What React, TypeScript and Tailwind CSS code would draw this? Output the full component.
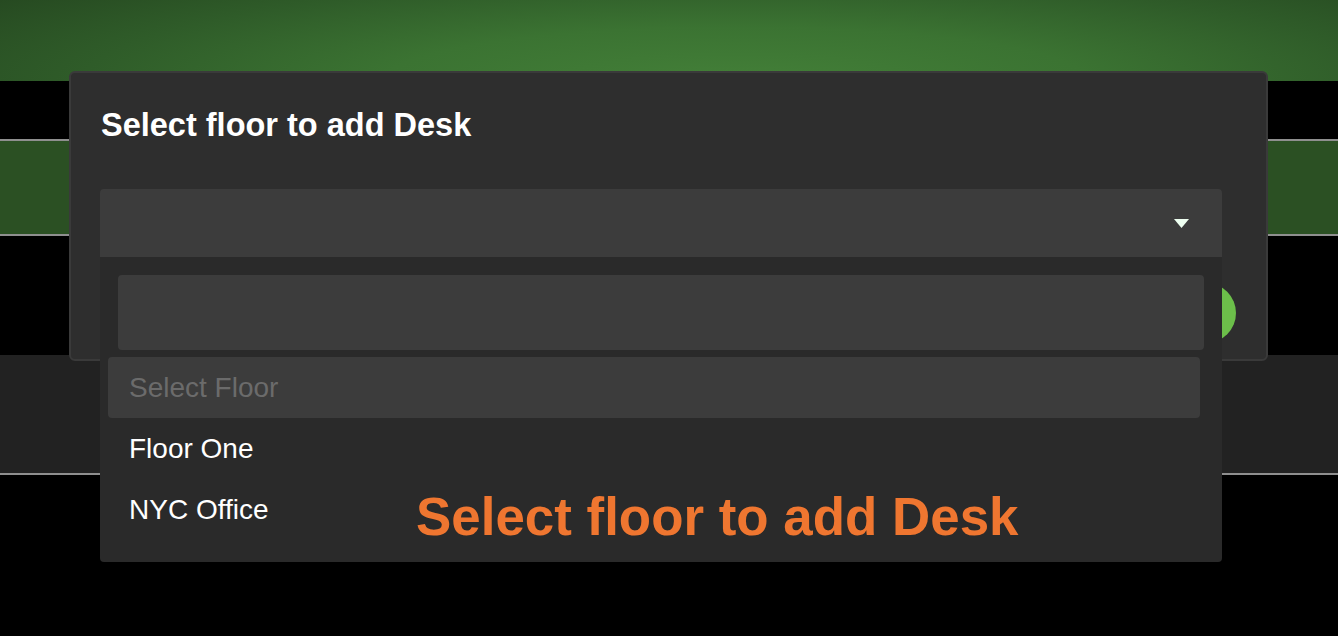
import React from "react";

export default function App() {
  return (
    <div className="relative w-[1338px] h-[636px] overflow-hidden bg-black font-['Liberation_Sans',Arial,sans-serif]">
      {/* background page bands */}
      <div className="flex flex-col">
        <div className="h-[81px] bg-[radial-gradient(ellipse_75%_190%_at_55%_100%,#437f38_0%,#3b7332_35%,#2f5c29_65%,#23431e_100%)]" />
        <div className="h-[58px] bg-black" />
        <div className="h-[2px] bg-[#8f8f8f]" />
        <div className="h-[93px] bg-[#2b5023]" />
        <div className="h-[2px] bg-[#8f8f8f]" />
        <div className="h-[119px] bg-black" />
        <div className="h-[118px] bg-[#222222]" />
        <div className="h-[2px] bg-[#8f8f8f]" />
        <div className="h-[161px] bg-black" />
      </div>

      {/* modal */}
      <div className="absolute left-[69px] top-[71px] w-[1199px] h-[290px] rounded-[6px] border-2 border-[#3a3a3a] bg-[#2e2e2e] pl-[30px] pt-[36px]">
        {/* green button behind dropdown */}
        <div className="absolute left-[1105px] top-[210px] w-[60px] h-[60px] rounded-full bg-[#6cbf4a]" />

        <h2 className="h-[32px] text-[32.5px] leading-[32px] font-bold text-white">Select floor to add Desk</h2>

        <div className="relative -ml-[1px] mt-[48px] w-[1122px]">
          <div className="flex h-[68px] items-center justify-end rounded-t-[4px] bg-[#3c3c3c] pr-[33px]">
            <svg width="15" height="9" viewBox="0 0 15 9">
              <path d="M0 0 H15 L7.5 9 Z" fill="#eefff1" />
            </svg>
          </div>

          {/* dropdown */}
          <div className="absolute left-0 top-full z-10 w-[1122px] rounded-b-[4px] bg-[#2a2a2a] pt-[18px] pb-[22px]">
            <div className="mx-[18px] h-[75px] rounded-[4px] bg-[#3c3c3c]" />
            <div className="mt-[7px] pl-[8px] pr-[22px]">
              <div className="flex h-[61px] items-center rounded-[4px] bg-[#3c3c3c] pl-[21px] text-[28px] leading-none text-[#6b6b6b]">
                Select Floor
              </div>
              <div className="flex h-[61px] items-center pl-[21px] text-[28px] leading-none text-white">
                Floor One
              </div>
              <div className="flex h-[61px] items-center pl-[21px] text-[28px] leading-none text-white">
                NYC Office
              </div>
            </div>
          </div>
        </div>
      </div>

      {/* orange annotation */}
      <div className="absolute left-[416px] top-[491px] z-20 text-[52.9px] leading-none font-bold text-[#ef7630]">
        Select floor to add Desk
      </div>
    </div>
  );
}
